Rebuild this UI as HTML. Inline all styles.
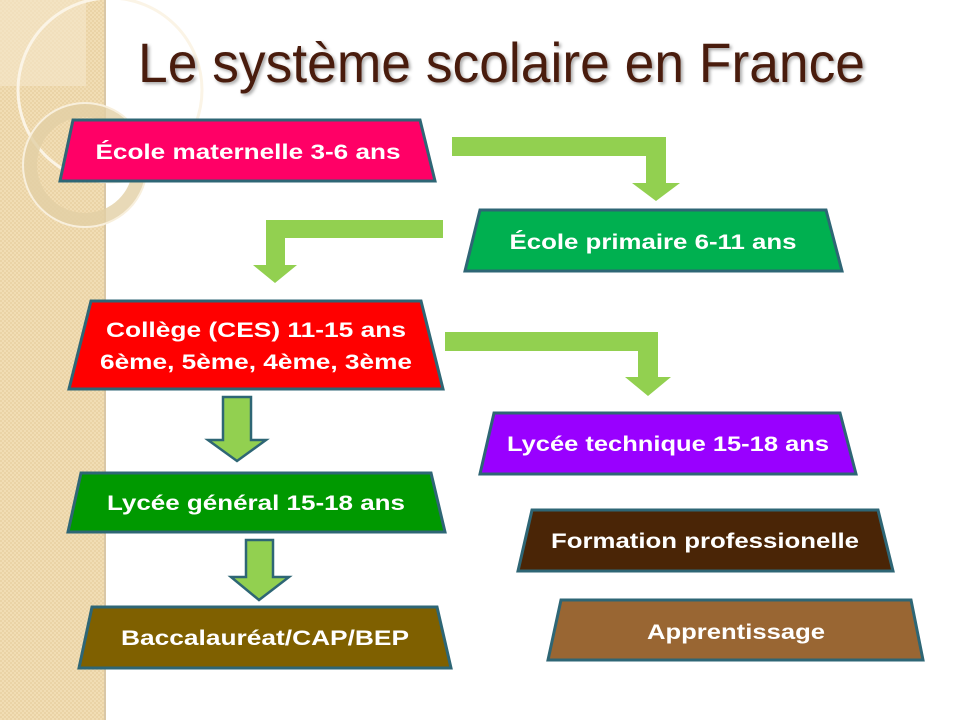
<!DOCTYPE html>
<html><head><meta charset="utf-8"><style>
html,body{margin:0;padding:0;width:960px;height:720px;overflow:hidden;background:#fff}
svg{display:block}
text{font-family:"Liberation Sans",sans-serif}
</style></head><body>
<svg width="960" height="720" viewBox="0 0 960 720" xmlns="http://www.w3.org/2000/svg">
<defs>
<pattern id="p" width="4" height="4" patternUnits="userSpaceOnUse">
<rect width="4" height="4" fill="#f1ddb4"/><rect width="2" height="2" fill="#ead3a6"/><rect x="2" y="2" width="2" height="2" fill="#ead3a6"/>
</pattern>
<filter id="sh"><feDropShadow dx="2" dy="2" stdDeviation="1.5" flood-color="#000" flood-opacity="0.35"/></filter>
</defs>
<rect x="0" y="0" width="105" height="720" fill="url(#p)"/>
<rect x="104" y="0" width="2" height="720" fill="#d9c7a6"/>
<rect x="0" y="0" width="86" height="86" fill="#f5e8cc" opacity="0.6"/>
<circle cx="110" cy="90" r="92" fill="none" stroke="#fbf4e6" stroke-width="3"/>
<circle cx="85" cy="165" r="55" fill="none" stroke="#e2cfa5" stroke-width="14" opacity="0.8"/>
<circle cx="85" cy="165" r="62" fill="none" stroke="#f8efdc" stroke-width="2"/>

<text x="138" y="82" font-size="56" fill="#4a1c0c" filter="url(#sh)" textLength="727" lengthAdjust="spacingAndGlyphs">Le système scolaire en France</text>

<g fill="#92d050">
<path d="M452 137H666V183H680L656 201L632 183H646V156H452Z"/>
<path d="M443 220V238H285V265H297L275 283L253 265H266V220Z"/>
<path d="M445 332H658V377H671L648 396L625 377H638V351H445Z"/>
</g>
<g fill="#92d050" stroke="#2e6675" stroke-width="2.5" stroke-linejoin="miter">
<path d="M223 397H251V440H266L237 461L208 440H223Z"/>
<path d="M246 540H273V577H289L259 600L231 577H246Z"/>
</g>

<g stroke="#2e6675" stroke-width="3" stroke-linejoin="miter">
<path d="M73 120H420L435 181H60Z" fill="#ff0066"/>
<path d="M480 210H826L842 271H465Z" fill="#00b050"/>
<path d="M91 301H421L443 389H69Z" fill="#ff0000"/>
<path d="M494 413H840L856 474H480Z" fill="#9900ff"/>
<path d="M81 473H431L445 532H68Z" fill="#009900"/>
<path d="M532 510H878L893 571H518Z" fill="#4a2506"/>
<path d="M92 607H437L451 668H79Z" fill="#7f6000"/>
<path d="M561 600H911L923 660H548Z" fill="#996633"/>
</g>

<g fill="#fff" font-size="21" font-weight="bold" text-anchor="middle">
<text x="248" y="159" textLength="305" lengthAdjust="spacingAndGlyphs">École maternelle 3-6 ans</text>
<text x="653" y="249" textLength="287" lengthAdjust="spacingAndGlyphs">École primaire 6-11 ans</text>
<text x="256" y="337" textLength="300" lengthAdjust="spacingAndGlyphs">Collège (CES) 11-15 ans</text>
<text x="256" y="369" textLength="312" lengthAdjust="spacingAndGlyphs">6ème, 5ème, 4ème, 3ème</text>
<text x="668" y="451" textLength="322" lengthAdjust="spacingAndGlyphs">Lycée technique 15-18 ans</text>
<text x="256" y="510" textLength="298" lengthAdjust="spacingAndGlyphs">Lycée général 15-18 ans</text>
<text x="705" y="548" textLength="308" lengthAdjust="spacingAndGlyphs">Formation professionelle</text>
<text x="265" y="645" textLength="288" lengthAdjust="spacingAndGlyphs">Baccalauréat/CAP/BEP</text>
<text x="736" y="639" textLength="178" lengthAdjust="spacingAndGlyphs">Apprentissage</text>
</g>
</svg>
</body></html>
